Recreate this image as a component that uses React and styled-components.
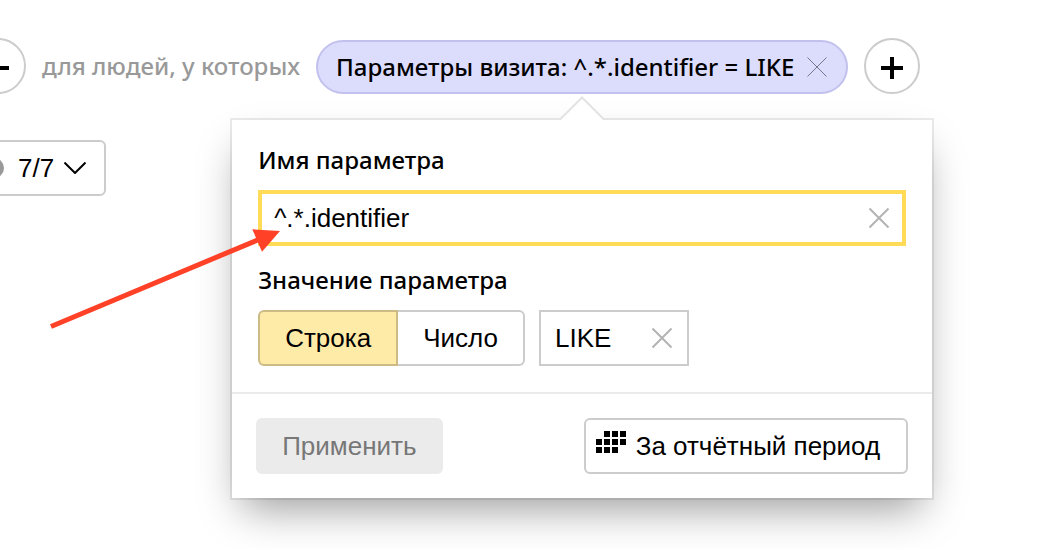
import React, { useState } from 'react';
import styled, { createGlobalStyle, css } from 'styled-components';

const GlobalStyle = createGlobalStyle`
  *, *::before, *::after {
    box-sizing: border-box;
  }

  body {
    margin: 0;
    background: #fff;
    color: #000;
    font-family: 'Liberation Sans', Arial, sans-serif;
    font-size: 26px;
    line-height: 36px;
    overflow: hidden;
  }

  button, input {
    font: inherit;
    color: inherit;
  }
`;

const textFont = css`
  font-family: 'Noto Sans', sans-serif;
  font-size: 24px;
  font-weight: 500;
  line-height: 36px;
`;

const Page = styled.main`
  position: relative;
  min-height: 100vh;
  padding-top: 38px;
`;

const SegmentBar = styled.div`
  display: flex;
  align-items: flex-end;
  gap: 16px;
  margin-left: -30px;
`;

const RoundButton = styled.button`
  display: flex;
  flex: none;
  align-items: center;
  justify-content: center;
  width: 56px;
  height: 56px;
  padding: 0;
  background: #fff;
  border: 2px solid #ccc;
  border-radius: 50%;
`;

const BarText = styled.span`
  ${textFont}
  align-self: center;
  color: #999;
  white-space: nowrap;
`;

const ChipAnchor = styled.div`
  position: relative;
  flex: none;
`;

const Chip = styled.div`
  ${textFont}
  display: flex;
  align-items: center;
  gap: 12px;
  height: 54px;
  padding: 0 18px;
  background: #dcdcfd;
  border: 2px solid #c2c1ee;
  border-radius: 27px;
  white-space: nowrap;
`;

const ClearButton = styled.button`
  display: flex;
  flex: none;
  padding: 0;
  background: none;
  border: 0;
`;

const Popup = styled.form`
  position: absolute;
  top: calc(100% + 26px);
  left: 50%;
  width: 700px;
  transform: translateX(-50%);
  background: #fff;
  box-shadow: 0 0 0 2px rgba(0, 0, 0, 0.08), 0 20px 40px -10px rgba(0, 0, 0, 0.4);
`;

const Tail = styled.svg`
  position: absolute;
  bottom: 100%;
  left: 50%;
  transform: translateX(-50%);
`;

const PopupBody = styled.div`
  display: flex;
  flex-direction: column;
  padding: 22px 26px 26px;
`;

const FieldLabel = styled.label`
  ${textFont}
  margin-bottom: 12px;
`;

const InputBox = styled.div`
  display: flex;
  align-items: center;
  height: 56px;
  padding: 0 ${({ $focused }) => ($focused ? 12 : 14)}px;
  border: ${({ $focused }) => ($focused ? '4px solid #ffdb57' : '2px solid #ccc')};
  width: ${({ $width }) => $width || 'auto'};
`;

const TextInput = styled.input`
  flex: 1;
  min-width: 0;
  padding: 0;
  background: none;
  border: 0;
  outline: 0;
`;

const ValueRow = styled.div`
  display: flex;
  gap: 14px;
`;

const ParamField = styled.div`
  display: flex;
  flex-direction: column;
  margin-bottom: 16px;
`;

const RadioGroup = styled.div`
  display: flex;
`;

const RadioOption = styled.label`
  position: relative;
  display: flex;
  align-items: center;
  height: 56px;
  padding: 0 25px;
  background: #fff;
  border: 2px solid #ccc;

  &:first-child {
    border-radius: 6px 0 0 6px;
  }

  &:last-child {
    border-left: 0;
    border-radius: 0 6px 6px 0;
  }

  &:has(input:checked) {
    background: #ffeba8;
    border-color: #ccbb84;
  }

  input {
    position: absolute;
    inset: 0;
    margin: 0;
    opacity: 0;
  }
`;

const PopupFooter = styled.div`
  display: flex;
  justify-content: space-between;
  padding: 24px;
  border-top: 2px solid #ebebeb;
`;

const Button = styled.button`
  display: flex;
  align-items: center;
  gap: 10px;
  height: 56px;
  padding: 0 26px 0 10px;
  background: #fff;
  border: 2px solid #ccc;
  border-radius: 6px;
  white-space: nowrap;
`;

const SubmitButton = styled(Button)`
  padding: 0 26px;
  background: #ebebeb;
  border: 0;
  color: #777;
`;

const PeriodIconBox = styled.svg`
  flex: none;
  margin-bottom: 8px;
`;

const MetricsButton = styled(Button)`
  margin: 46px 0 0 -36px;
  padding: 0 18px;
`;

const Dot = styled.span`
  width: 20px;
  height: 20px;
  margin-right: 4px;
  background: #999;
  border-radius: 50%;
`;

const Pointer = styled.svg`
  position: absolute;
  top: 220px;
  left: 40px;
  pointer-events: none;
`;

const Cross = ({ color = '#b3b3b3', width = 2 }) => (
  <svg width="22" height="22" viewBox="0 0 22 22" stroke={color} strokeWidth={width} aria-hidden="true">
    <path d="M1.5 1.5 20.5 20.5M20.5 1.5 1.5 20.5" />
  </svg>
);

const periodCells = [
  [8, 0], [16, 0], [24, 0],
  [0, 8], [8, 8], [16, 8], [24, 8],
  [0, 16], [8, 16], [16, 16],
];

const PeriodIcon = () => (
  <PeriodIconBox width="30" height="22" viewBox="0 0 30 22" aria-hidden="true">
    {periodCells.map(([x, y]) => (
      <rect key={`${x}-${y}`} x={x} y={y} width="6" height="6" />
    ))}
  </PeriodIconBox>
);

const ParameterPopup = ({ name, value, onName, onValue }) => {
  const [type, setType] = useState('string');

  return (
    <Popup onSubmit={(e) => e.preventDefault()}>
      <Tail width="48" height="24" viewBox="0 0 48 24">
        <path d="M1 24 24 1 47 24Z" fill="#fff" />
        <path d="M1.5 24 24 1.5 46.5 24" fill="none" stroke="#e3e3e3" strokeWidth="2" />
      </Tail>
      <PopupBody>
        <ParamField>
          <FieldLabel htmlFor="param-name">Имя параметра</FieldLabel>
          <InputBox $focused>
            <TextInput id="param-name" value={name} onChange={(e) => onName(e.target.value)} />
            <ClearButton type="button" aria-label="Очистить имя" onClick={() => onName('')}>
              <Cross />
            </ClearButton>
          </InputBox>
        </ParamField>
        <FieldLabel htmlFor="param-value">Значение параметра</FieldLabel>
        <ValueRow>
          <RadioGroup role="radiogroup">
            <RadioOption>
              <input type="radio" name="type" checked={type === 'string'} onChange={() => setType('string')} />
              Строка
            </RadioOption>
            <RadioOption>
              <input type="radio" name="type" checked={type === 'number'} onChange={() => setType('number')} />
              Число
            </RadioOption>
          </RadioGroup>
          <InputBox $width="150px">
            <TextInput id="param-value" value={value} onChange={(e) => onValue(e.target.value)} />
            <ClearButton type="button" aria-label="Очистить значение" onClick={() => onValue('')}>
              <Cross />
            </ClearButton>
          </InputBox>
        </ValueRow>
      </PopupBody>
      <PopupFooter>
        <SubmitButton type="submit" disabled>Применить</SubmitButton>
        <Button type="button">
          <PeriodIcon />
          За отчётный период
        </Button>
      </PopupFooter>
    </Popup>
  );
};

const App = () => {
  const [name, setName] = useState('^.*.identifier');
  const [value, setValue] = useState('LIKE');

  return (
    <>
      <GlobalStyle />
      <Page>
        <SegmentBar>
          <RoundButton type="button" aria-label="Добавить визиты">
            <svg width="22" height="26" viewBox="0 0 22 26" stroke="#000" strokeWidth="4" aria-hidden="true">
              <path d="M0 15H22M11 4V26" />
            </svg>
          </RoundButton>
          <BarText>для людей, у которых</BarText>
          <ChipAnchor>
            <Chip>
              Параметры визита: {name} = {value}
              <ClearButton type="button" aria-label="Удалить условие">
                <Cross color="#77778c" width={1} />
              </ClearButton>
            </Chip>
            <ParameterPopup name={name} value={value} onName={setName} onValue={setValue} />
          </ChipAnchor>
          <RoundButton type="button" aria-label="Добавить условие">
            <svg width="22" height="26" viewBox="0 0 22 26" stroke="#000" strokeWidth="4" aria-hidden="true">
              <path d="M0 15H22M11 4V26" />
            </svg>
          </RoundButton>
        </SegmentBar>
        <MetricsButton type="button">
          <Dot />
          7/7
          <svg width="22" height="12" viewBox="0 0 22 12" fill="none" stroke="#000" strokeWidth="2" aria-hidden="true">
            <path d="M.5 .5 11 11 21.5 .5" />
          </svg>
        </MetricsButton>
        <Pointer width="244" height="112" viewBox="40 220 244 112" aria-hidden="true">
          <path d="M51 326.5 260 239" stroke="#ff4127" strokeWidth="5" />
          <path d="M252.3 229.3 280 231 262 251.7Z" fill="#ff4127" />
        </Pointer>
      </Page>
    </>
  );
};

export default App;
